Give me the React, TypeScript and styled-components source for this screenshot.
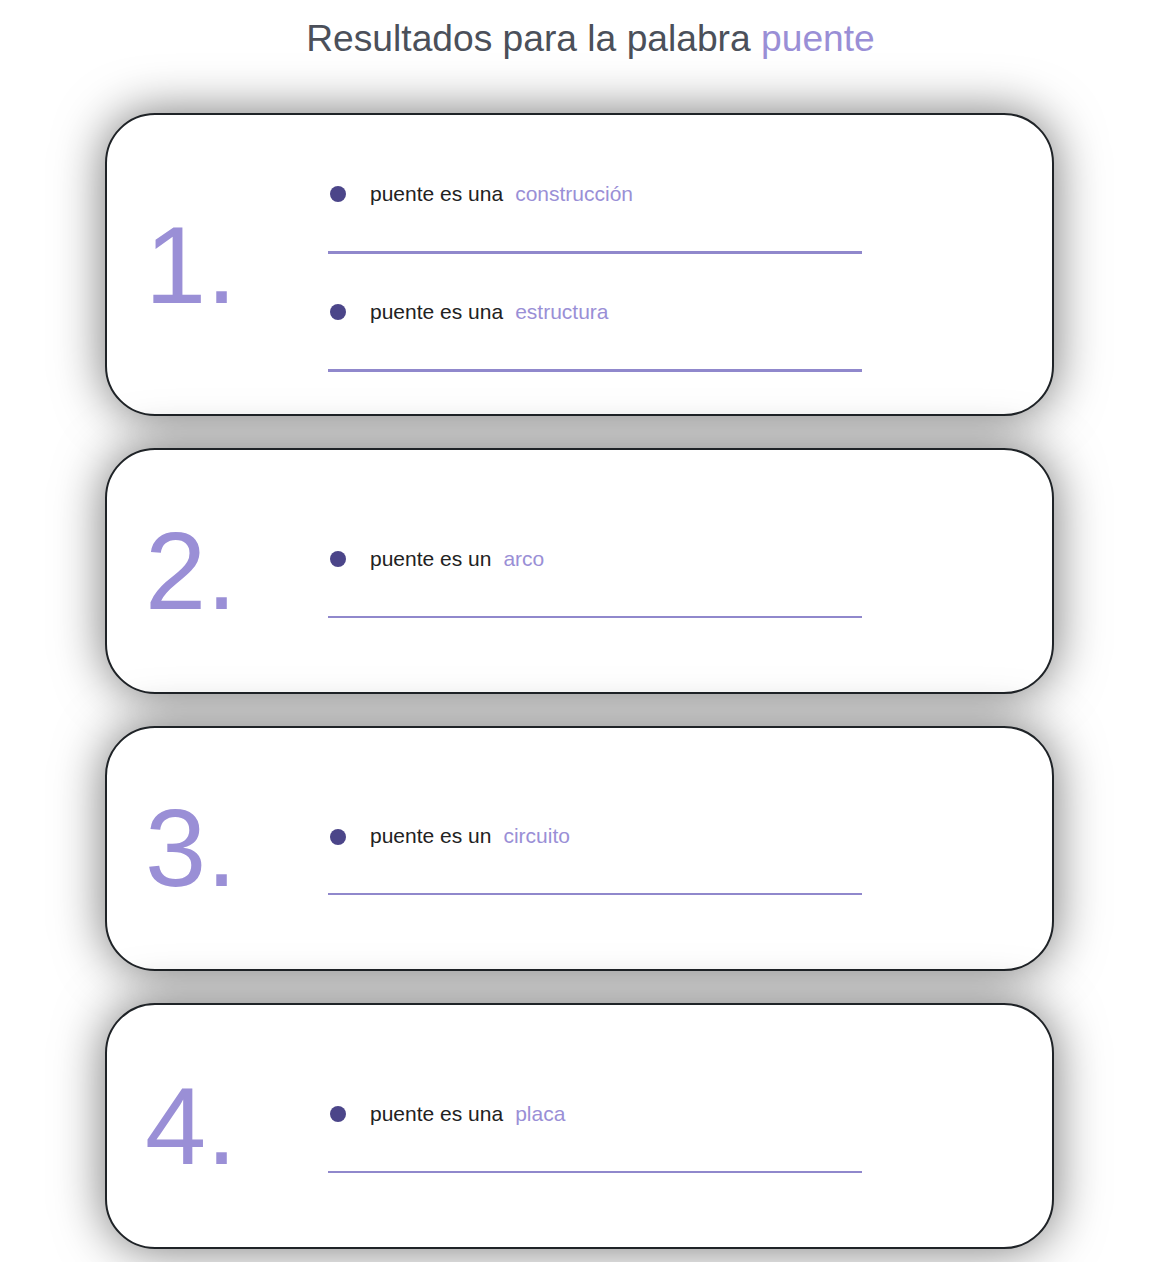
import React from "react";
import styled, { createGlobalStyle } from "styled-components";

const GlobalStyle = createGlobalStyle`
  html, body {
    margin: 0;
    padding: 0;
    background: #ffffff;
  }
  body {
    font-family: "Liberation Sans", Arial, sans-serif;
  }
`;

const Page = styled.main`
  display: flex;
  flex-direction: column;
  padding-bottom: 40px;
`;

const Title = styled.h1`
  margin: 16px 0 0;
  padding-left: 5px;
  font-size: 37.2px;
  line-height: 44px;
  font-weight: 400;
  color: #4b505a;
  text-align: center;
`;

const Highlight = styled.span`
  color: #9a8fd6;
`;

const List = styled.section`
  display: flex;
  flex-direction: column;
  gap: 32px;
  width: 949px;
  margin: 53px 0 0 105px;
`;

const Card = styled.article`
  box-sizing: border-box;
  min-height: 245.5px;
  padding: 31.5px 0 31.5px 38px;
  display: grid;
  grid-template-columns: 183px 534px;
  align-items: center;
  background: #ffffff;
  border: 2px solid #1f2327;
  border-radius: 50px;
  box-shadow: 0 0 50px rgba(0, 0, 0, 0.55);
`;

const Number = styled.div`
  font-size: 110px;
  line-height: 1;
  color: #9a8fd6;
`;

const Items = styled.ul`
  margin: 0;
  padding: 0;
  list-style: none;
  display: flex;
  flex-direction: column;
`;

const Item = styled.li`
  box-sizing: border-box;
  height: 118px;
  padding-top: 35px;
  display: flex;
  flex-direction: column;
`;

const Row = styled.div`
  display: flex;
  align-items: center;
  height: 24px;
  font-size: 21px;
  line-height: 24px;
  color: #222222;
`;

const Bullet = styled.span`
  flex: none;
  width: 16px;
  height: 16px;
  margin: 1px 24px 0 2px;
  border-radius: 50%;
  background: #4b4589;
`;

const Keyword = styled.span`
  margin-left: 12px;
  color: #9a8fd6;
`;

const Rule = styled.div<{ $thick: boolean }>`
  margin-top: 45px;
  height: ${(p) => (p.$thick ? 3 : 2)}px;
  background: #9088cc;
`;

type Entry = { prefix: string; word: string };

const groups: Entry[][] = [
  [
    { prefix: "puente es una", word: "construcción" },
    { prefix: "puente es una", word: "estructura" },
  ],
  [{ prefix: "puente es un", word: "arco" }],
  [{ prefix: "puente es un", word: "circuito" }],
  [{ prefix: "puente es una", word: "placa" }],
];

export default function App() {
  return (
    <>
      <GlobalStyle />
      <Page>
        <Title>
          Resultados para la palabra <Highlight>puente</Highlight>
        </Title>
        <List>
          {groups.map((entries, i) => {
            const thick = entries.length > 1;
            return (
              <Card key={i}>
                <Number>{i + 1}.</Number>
                <Items>
                  {entries.map((e, j) => (
                    <Item key={j}>
                      <Row>
                        <Bullet />
                        {e.prefix}
                        <Keyword>{e.word}</Keyword>
                      </Row>
                      <Rule $thick={thick} />
                    </Item>
                  ))}
                </Items>
              </Card>
            );
          })}
        </List>
      </Page>
    </>
  );
}
